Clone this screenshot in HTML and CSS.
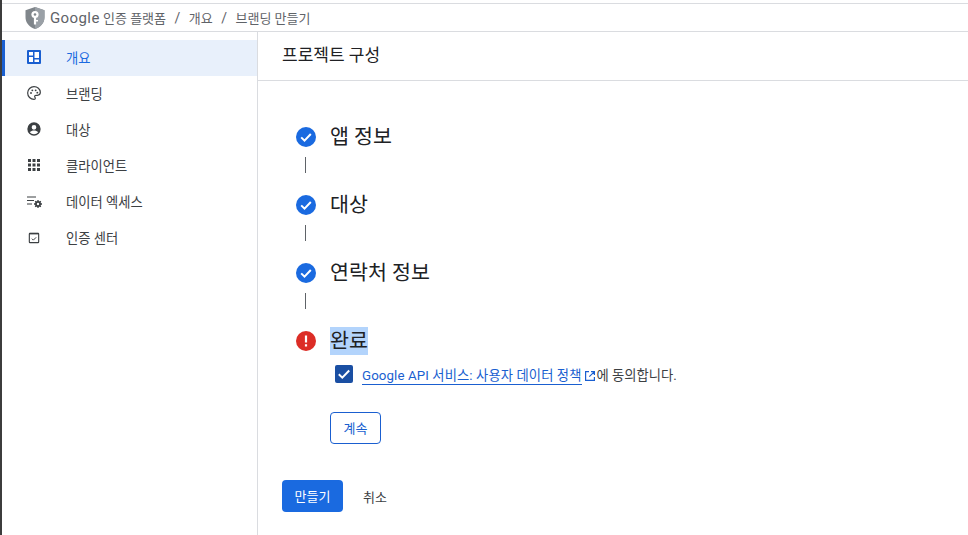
FILE: index.html
```html
<!DOCTYPE html>
<html lang="ko">
<head>
<meta charset="utf-8">
<title>브랜딩 만들기</title>
<link rel="stylesheet" href="styles.css">
</head>
<body>
<div class="page">
  <header class="topbar">
    <svg class="logo" viewBox="0 0 22 24" width="22" height="24"><path d="M11 1 L20.5 4.2 V11 C20.5 17 16.5 21.2 11 23 C5.5 21.2 1.500 17 1.500 11 V4.200 Z" fill="#80868b"/><path d="M11 1 L20.500 4.200 V11 C20.500 17 16.500 21.200 11 23 Z" fill="#9aa0a6"/><circle cx="11" cy="8.500" r="3.600" fill="#fff"/><circle cx="11" cy="8.500" r="1.300" fill="#80868b"/><path d="M9.900 11h2.200v7.500h-2.200z" fill="#fff"/><path d="M12 14h2v1.500h-2z" fill="#fff"/></svg>
    <nav class="crumbs"><span><span class="brand">Google</span> 인증 플랫폼</span><span class="sep">/</span><span>개요</span><span class="sep">/</span><span>브랜딩 만들기</span></nav>
  </header>
  <div class="main">
    <aside class="sidebar">
      <a class="item active">
        <svg class="ico" viewBox="0 0 16 16"><rect x="1" y="1" width="14" height="14" rx="1" fill="#1a5fd0"/><path fill="#fff" d="M3 3h4v3.500H3zM3 8h4v5H3zM8.500 3H13v6H8.500zM8.500 10.500H13V13H8.500z"/></svg>
        <span>개요</span>
      </a>
      <a class="item">
        <svg class="ico" viewBox="0 0 24 24"><path fill="none" stroke="#3c4043" stroke-width="1.800" d="M12 2.500a9.500 9.500 0 0 0 0 19c1.300 0 2-.8 2-1.700 0-1.200-1-1.500-1-2.600 0-1 .8-1.700 1.800-1.700H17a4.500 4.500 0 0 0 4.500-4.500C21.500 6 17 2.500 12 2.500z"/><circle cx="7.500" cy="12" r="1.400" fill="#3c4043"/><circle cx="9.500" cy="8" r="1.400" fill="#3c4043"/><circle cx="14.500" cy="8" r="1.400" fill="#3c4043"/><circle cx="17" cy="11.500" r="1.400" fill="#3c4043"/></svg>
        <span>브랜딩</span>
      </a>
      <a class="item">
        <svg class="ico" viewBox="0 0 24 24"><path fill="#3c4043" d="M12 2a10 10 0 1 0 0 20 10 10 0 0 0 0-20zm0 4a3.500 3.500 0 1 1 0 7 3.500 3.500 0 0 1 0-7zm0 14a8 8 0 0 1-6.300-3c1.500-1.900 4-2.700 6.300-2.700s4.800.8 6.300 2.700A8 8 0 0 1 12 20z"/></svg>
        <span>대상</span>
      </a>
      <a class="item">
        <svg class="ico" viewBox="0 0 16 16"><path fill="#3c4043" d="M2 2h3v3H2zM6.500 2h3v3h-3zM11 2h3v3h-3zM2 6.500h3v3H2zM6.500 6.500h3v3h-3zM11 6.500h3v3h-3zM2 11h3v3H2zM6.500 11h3v3h-3zM11 11h3v3h-3z"/></svg>
        <span>클라이언트</span>
      </a>
      <a class="item">
        <svg class="ico" viewBox="0 0 16 16"><path fill="#3c4043" d="M1 3.500h9v1.100H1zM1 7h7v1.100H1zM1 10.500h5v1.100H1z"/><path stroke="#3c4043" stroke-width="1.300" d="M12 7v8M8 11h8M9.200 8.200l5.600 5.600M14.800 8.200l-5.600 5.600"/><circle cx="12" cy="11" r="2.900" fill="#3c4043"/><circle cx="12" cy="11" r="1.200" fill="#fff"/></svg>
        <span>데이터 엑세스</span>
      </a>
      <a class="item">
        <svg class="ico" viewBox="0 0 24 24"><rect x="5" y="6.500" width="14" height="14" rx="1" fill="none" stroke="#3c4043" stroke-width="1.700"/><path d="M5 7h14" stroke="#3c4043" stroke-width="2.200"/><path d="M8.800 14.500l2.200 2.200 4.200-4.200" fill="none" stroke="#3c4043" stroke-width="1.500"/></svg>
        <span>인증 센터</span>
      </a>
    </aside>
    <section class="content">
      <h1 class="title">프로젝트 구성</h1>
      <div class="body">
        <ol class="steps">
          <li class="step">
            <svg class="state" viewBox="0 0 20 20"><circle cx="10" cy="10" r="10" fill="#1a6ae0"/><path d="M5.200 10.400l3.300 3.200 6.300-6.600" fill="none" stroke="#fff" stroke-width="2"/></svg>
            <span class="step-name">앱 정보</span>
          </li>
          <li class="rail"></li>
          <li class="step">
            <svg class="state" viewBox="0 0 20 20"><circle cx="10" cy="10" r="10" fill="#1a6ae0"/><path d="M5.200 10.400l3.300 3.200 6.300-6.600" fill="none" stroke="#fff" stroke-width="2"/></svg>
            <span class="step-name">대상</span>
          </li>
          <li class="rail"></li>
          <li class="step">
            <svg class="state" viewBox="0 0 20 20"><circle cx="10" cy="10" r="10" fill="#1a6ae0"/><path d="M5.200 10.400l3.300 3.200 6.300-6.600" fill="none" stroke="#fff" stroke-width="2"/></svg>
            <span class="step-name">연락처 정보</span>
          </li>
          <li class="rail"></li>
          <li class="step">
            <svg class="state" viewBox="0 0 20 20"><circle cx="10" cy="10" r="10" fill="#dc2d26"/><path d="M8.900 4.500h2.200v7h-2.200zM8.900 13.200h2.200v2.200h-2.200z" fill="#fff"/></svg>
            <span class="step-name selected">완료</span>
          </li>
        </ol>
        <div class="finish">
          <label class="agree">
            <svg class="check" viewBox="0 0 18 18"><rect width="18" height="18" rx="2" fill="#1a4fa3"/><path d="M3.800 9.300l3.500 3.400 6.900-7.200" fill="none" stroke="#fff" stroke-width="2"/></svg>
            <span><a class="link">Google API 서비스: 사용자 데이터 정책</a><svg class="ext" viewBox="0 0 12 12"><path d="M5 1.600H1.600v8.800h8.800V7M7 1.600h3.400V5M10.200 1.800L5.300 6.700" fill="none" stroke="#1a5fd0" stroke-width="1.200"/></svg>에 동의합니다.</span>
          </label>
          <button class="btn-outline">계속</button>
        </div>
        <div class="actions">
          <button class="btn-primary">만들기</button>
          <button class="btn-text">취소</button>
        </div>
      </div>
    </section>
  </div>
</div>
</body>
</html>
```
FILE: styles.css
```css
* { box-sizing: border-box; }
html, body { margin: 0; height: 100%; overflow: hidden; background: #fff; }
body {
  font-family: Roboto, "Noto Sans CJK KR", sans-serif;
  color: #202124;
}
.page {
  height: 535px;
  width: 968px;
  border-left: 2px solid #3c3c3c;
  padding-top: 3px;
  display: flex;
  flex-direction: column;
}
.topbar {
  height: 29px;
  border-top: 1px solid #dadce0;
  border-bottom: 1px solid #dadce0;
  display: flex;
  align-items: center;
  padding-left: 22px;
  flex: none;
}
.logo { flex: none; margin-right: 4px; }
.crumbs {
  display: flex;
  align-items: baseline;
  gap: 8.500px;
  font-size: 13px;
  color: #5f6368;
  white-space: nowrap;
}
.brand { font-size: 15px; letter-spacing: 0.400px; }
.sep { font-size: 14px; }
.main { flex: 1; display: flex; min-height: 0; }
.sidebar {
  width: 256px;
  flex: none;
  border-right: 1px solid #dadce0;
  padding-top: 8px;
}
.item {
  height: 36px;
  display: flex;
  align-items: center;
  padding: 0 0 2px 24px;
  gap: 24px;
  font-size: 13.300px;
  color: #3c4043;
}
.item.active {
  background: #e8f0fb;
  color: #1a6ae0;
  box-shadow: inset 3px 0 0 #1a5fd0;
}
.ico { width: 16px; height: 16px; flex: none; }
.content { flex: 1; min-width: 0; }
.title {
  margin: 0;
  height: 49px;
  border-bottom: 1px solid #dadce0;
  padding-left: 24px;
  font-size: 17px;
  font-weight: 400;
  line-height: 47px;
}
.body { padding: 45px 0 0 24px; }
.steps { list-style: none; margin: 0; padding: 0 0 0 14px; }
.step {
  display: flex;
  align-items: center;
  height: 22px;
  gap: 14px;
  font-size: 20.600px;
}
.state { width: 20px; height: 20px; flex: none; }
.step-name { line-height: 28px; white-space: nowrap; }
.step-name.selected { background: #b3d4fc; }
.rail {
  width: 1px;
  height: 16px;
  margin: 9px 0 21px 9px;
  background: #5f6368;
}
.finish { padding: 0 0 0 48px; }
.agree {
  display: flex;
  align-items: center;
  gap: 9px;
  margin: 12px 0 0 5px;
  font-size: 13.300px;
  color: #3c4043;
  height: 20px;
}
.check { width: 18px; height: 18px; flex: none; }
.link { color: #1a5fd0; border-bottom: 1px solid #1a5fd0; padding-bottom: 1px; letter-spacing: 0.100px; }
.ext { width: 12px; height: 12px; margin: 0 1px 0 2px; vertical-align: -2px; }
button { font-family: inherit; cursor: pointer; }
.btn-outline {
  display: block;
  margin-top: 28px;
  width: 51px;
  height: 32px;
  background: #fff;
  border: 1px solid #1a5fd0;
  border-radius: 4px;
  color: #1a5fd0;
  font-size: 13px;
  padding: 0 0 2px;
}
.actions { display: flex; align-items: center; margin-top: 36px; gap: 8px; }
.btn-primary {
  width: 61px;
  height: 32px;
  background: #1a6ae0;
  border: 0;
  border-radius: 4px;
  color: #fff;
  font-size: 13px;
  padding: 0 0 2px;
}
.btn-text {
  width: 48px;
  height: 32px;
  background: none;
  border: 0;
  color: #3c4043;
  font-size: 13px;
  padding: 0;
}
```
